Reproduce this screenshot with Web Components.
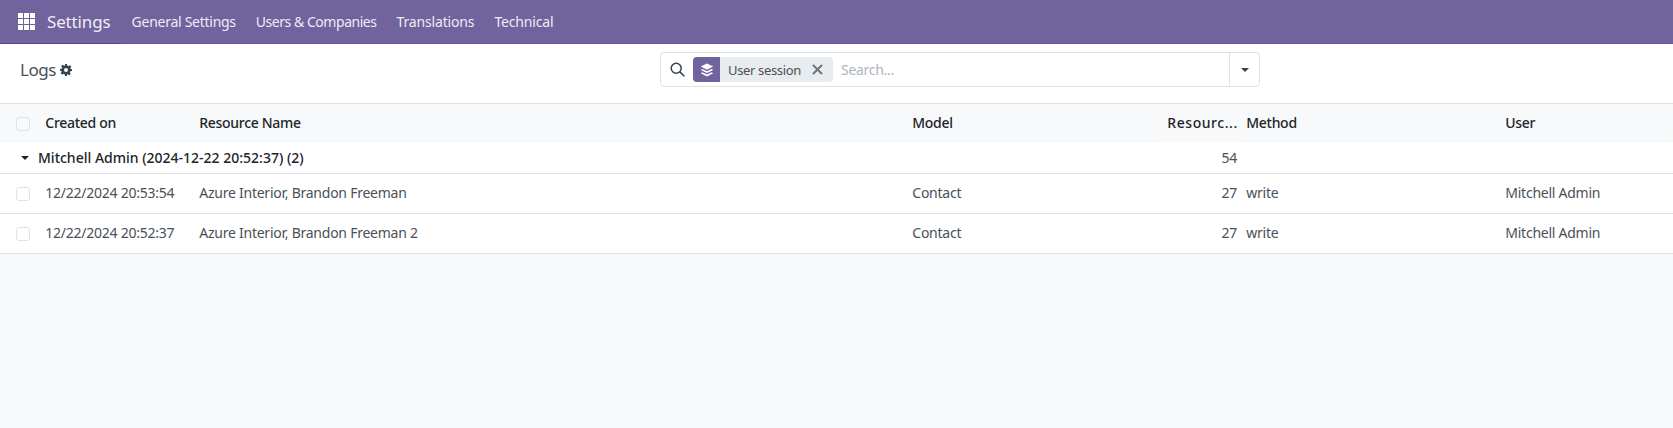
<!DOCTYPE html>
<html>
<head>
<meta charset="utf-8">
<title>Logs</title>
<style>
  html, body { margin: 0; height: 100%; }
  body {
    background: #f8f9fa;
    color: #495057;
    font: 14px "Noto Sans", "Open Sans", sans-serif;
    overflow: hidden;
  }
</style>
</head>
<body>
<app-navbar brand="Settings">
  <nav-item>General Settings</nav-item>
  <nav-item style="letter-spacing:-0.46px">Users &amp; Companies</nav-item>
  <nav-item style="letter-spacing:-0.16px">Translations</nav-item>
  <nav-item style="letter-spacing:-0.16px">Technical</nav-item>
</app-navbar>
<control-panel heading="Logs"></control-panel>
<log-list>
  <log-row head>
    <span>Created on</span><span>Resource Name</span><span>Model</span>
    <span class="num">Resourc...</span><span>Method</span><span>User</span>
  </log-row>
  <log-group label="Mitchell Admin (2024-12-22 20:52:37) (2)" total="54"></log-group>
  <log-row>
    <span>12/22/2024 20:53:54</span><span>Azure Interior, Brandon Freeman</span><span>Contact</span>
    <span class="num">27</span><span>write</span><span>Mitchell Admin</span>
  </log-row>
  <log-row>
    <span>12/22/2024 20:52:37</span><span>Azure Interior, Brandon Freeman 2</span><span>Contact</span>
    <span class="num">27</span><span>write</span><span>Mitchell Admin</span>
  </log-row>
</log-list>

<script>
// shared column widths for header, group and data rows
const COLS = '37px 154px 713px 255px 79px 259px 1fr';

class AppNavbar extends HTMLElement {
  connectedCallback() {
    this.attachShadow({ mode: 'open' });
    this.shadowRoot.innerHTML = `
      <style>
        :host {
          display: flex;
          align-items: center;
          height: 43px;
          background: #71639e;
          color: #fff;
          border-bottom: 1px solid #65588f;
        }
        .brand {
          display: flex;
          align-items: center;
          height: 43px;
          width: 122px;
          flex: none;
          box-sizing: border-box;
          padding-left: 18px;
          gap: 12px;
          font-size: 17px;
          letter-spacing: -0.15px;
          color: #f0eef5;
          box-shadow: 0 1px 0 #574b7d;
        }
        svg { display: block; }
        .items { display: flex; letter-spacing: -0.27px; }
      </style>
      <div class="brand">
        <svg width="17" height="17" viewBox="0 0 17 17" fill="#fff">
          <rect x="0" y="0" width="5" height="5"/><rect x="6" y="0" width="5" height="5"/><rect x="12" y="0" width="5" height="5"/>
          <rect x="0" y="6" width="5" height="5"/><rect x="6" y="6" width="5" height="5"/><rect x="12" y="6" width="5" height="5"/>
          <rect x="0" y="12" width="5" height="5"/><rect x="6" y="12" width="5" height="5"/><rect x="12" y="12" width="5" height="5"/>
        </svg>
        <span>${this.getAttribute('brand')}</span>
      </div>
      <div class="items"><slot></slot></div>
    `;
  }
}

class NavItem extends HTMLElement {
  connectedCallback() {
    this.attachShadow({ mode: 'open' });
    this.shadowRoot.innerHTML = `
      <style>
        :host { display: block; padding: 0 10.4px 0 9.6px; color: #eeecf4; white-space: nowrap; }
      </style>
      <slot></slot>
    `;
  }
}

class SearchBox extends HTMLElement {
  connectedCallback() {
    this.attachShadow({ mode: 'open' });
    this.shadowRoot.innerHTML = `
      <style>
        :host {
          display: flex;
          align-items: center;
          width: 600px;
          height: 35px;
          box-sizing: border-box;
          border: 1px solid #dee2e6;
          border-radius: 4px;
          background: #fff;
          letter-spacing: -0.25px;
        }
        .icon { margin: 0 8px 0 9px; flex: none; }
        .facet {
          display: flex;
          align-items: center;
          width: 140px;
          height: 25px;
          background: #e9ecef;
          border-radius: 4px;
          flex: none;
          overflow: hidden;
          font-size: 13px;
          letter-spacing: -0.35px;
          color: #495057;
        }
        .kind {
          display: flex;
          align-items: center;
          justify-content: center;
          width: 27px;
          height: 25px;
          background: #71639e;
        }
        .name { flex: 1; padding: 0 8px; white-space: nowrap; }
        .close { margin: 0 10px 0 0; flex: none; }
        .input { flex: 1; padding-left: 8px; color: #adb5bd; font-size: 14px; letter-spacing: -0.3px; }
        .toggle {
          display: flex;
          align-items: center;
          justify-content: center;
          width: 29px;
          height: 100%;
          border-left: 1px solid #dee2e6;
          flex: none;
        }
        .caret { width: 0; height: 0; border: 4px solid transparent; border-top-color: #374151; border-bottom: 0; }
        svg { display: block; }
      </style>
      <svg class="icon" width="15" height="15" viewBox="0 0 15 15" fill="none" stroke="#374151" stroke-width="1.5">
        <circle cx="6.2" cy="6.2" r="5"/><path d="M9.9 9.9 14 14" stroke-linecap="round"/>
      </svg>
      <div class="facet">
        <div class="kind">
          <svg width="14" height="14" viewBox="0 0 14 14" fill="#fff">
            <path d="M7 0.5 13.2 3.6 7 6.8 0.8 3.6Z"/>
            <path d="M2.4 6 7 8.3 11.6 6 13.2 6.9 7 10 0.8 6.9Z"/>
            <path d="M2.4 9.3 7 11.6 11.6 9.3 13.2 10.2 7 13.4 0.8 10.2Z"/>
          </svg>
        </div>
        <span class="name">User session</span>
        <svg class="close" width="11" height="11" viewBox="0 0 11 11" stroke="#6c757d" stroke-width="2" stroke-linecap="round">
          <path d="M1.5 1.5 9.5 9.5M9.5 1.5 1.5 9.5"/>
        </svg>
      </div>
      <div class="input">Search...</div>
      <div class="toggle"><div class="caret"></div></div>
    `;
  }
}

class ControlPanel extends HTMLElement {
  connectedCallback() {
    this.attachShadow({ mode: 'open' });
    this.shadowRoot.innerHTML = `
      <style>
        :host {
          display: grid;
          grid-template-columns: 660px 600px 1fr;
          align-items: center;
          height: 59px;
          background: #fff;
          border-bottom: 1px solid #dee2e6;
        }
        .title { display: flex; align-items: center; gap: 4px; padding-left: 20px; padding-bottom: 8px; font-size: 17px; letter-spacing: -0.45px; color: #495057; }
        search-box { margin-bottom: 8px; }
        svg { display: block; }
      </style>
      <div class="title">
        <span>${this.getAttribute('heading')}</span>
        <svg width="12" height="12" viewBox="0 0 24 24" fill="#374151">
          <path fill-rule="evenodd" d="M10 0h4l.7 3.4 2.1.9 2.9-1.9 2.9 2.9-1.9 2.9.9 2.1L24 10v4l-3.4.7-.9 2.1 1.9 2.9-2.9 2.9-2.9-1.9-2.1.9L14 24h-4l-.7-3.4-2.1-.9-2.9 1.9-2.9-2.9 1.9-2.9-.9-2.1L0 14v-4l3.4-.7.9-2.1-1.9-2.9 2.9-2.9 2.9 1.9 2.1-.9ZM12 8a4 4 0 1 0 0 8 4 4 0 0 0 0-8Z"/>
        </svg>
      </div>
      <search-box></search-box>
    `;
  }
}

class LogList extends HTMLElement {
  connectedCallback() {
    this.attachShadow({ mode: 'open' });
    this.shadowRoot.innerHTML = `
      <style>:host { display: block; }</style>
      <slot></slot>
    `;
  }
}

class LogRow extends HTMLElement {
  connectedCallback() {
    this.attachShadow({ mode: 'open' });
    const isHead = this.hasAttribute('head');
    // move the light-DOM spans into the grid, each one is a cell
    const cells = [...this.querySelectorAll('span')].map(s =>
      `<div class="cell ${s.className}">${s.innerHTML}</div>`).join('');
    this.innerHTML = '';
    this.shadowRoot.innerHTML = `
      <style>
        :host {
          display: grid;
          grid-template-columns: ${COLS};
          align-items: center;
          box-sizing: border-box;
          height: ${isHead ? 39 : 40}px;
          background: ${isHead ? '#f8f9fa' : '#fff'};
          border-bottom: ${isHead ? 0 : '1px solid #dee2e6'};
          color: ${isHead ? '#212529' : '#495057'};
          font-weight: ${isHead ? 500 : 400};
          letter-spacing: ${isHead ? -0.3 : -0.25}px;
        }
        .cell { padding: 0 8px 2px 8.3px; white-space: nowrap; overflow: hidden; }
        .num { text-align: right; padding-right: 1px; }
        .head.num {
          align-self: stretch;
          line-height: 37px;
          letter-spacing: 0.55px;
          box-shadow: inset 0 -1px 0 #fff;
        }
        .box {
          width: 14px; height: 14px;
          margin-left: 16px;
          box-sizing: border-box;
          border: 1px solid #dee2e6;
          border-radius: 3px;
          background: ${isHead ? 'transparent' : '#fff'};
        }
      </style>
      <div class="box"></div>
      ${isHead ? cells.replace('cell num', 'cell head num') : cells}
    `;
  }
}

class LogGroup extends HTMLElement {
  connectedCallback() {
    this.attachShadow({ mode: 'open' });
    this.shadowRoot.innerHTML = `
      <style>
        :host {
          display: grid;
          grid-template-columns: ${COLS};
          align-items: center;
          box-sizing: border-box;
          height: 31px;
          background: #fff;
          border-bottom: 1px solid #dee2e6;
        }
        .label {
          grid-column: 1 / span 4;
          display: flex;
          align-items: center;
          gap: 9px;
          padding: 0 0 2px 21px;
          font-weight: 500;
          color: #212529;
          white-space: nowrap;
        }
        .caret { width: 0; height: 0; border: 4px solid transparent; border-top-color: #212529; border-bottom: 0; margin-top: 2px; }
        .num { text-align: right; padding: 0 1px 2px 0; letter-spacing: -0.24px; }
      </style>
      <div class="label"><div class="caret"></div><span>${this.getAttribute('label')}</span></div>
      <div class="num">${this.getAttribute('total')}</div>
    `;
  }
}

customElements.define('app-navbar', AppNavbar);
customElements.define('nav-item', NavItem);
customElements.define('search-box', SearchBox);
customElements.define('control-panel', ControlPanel);
customElements.define('log-list', LogList);
customElements.define('log-row', LogRow);
customElements.define('log-group', LogGroup);
</script>
</body>
</html>
